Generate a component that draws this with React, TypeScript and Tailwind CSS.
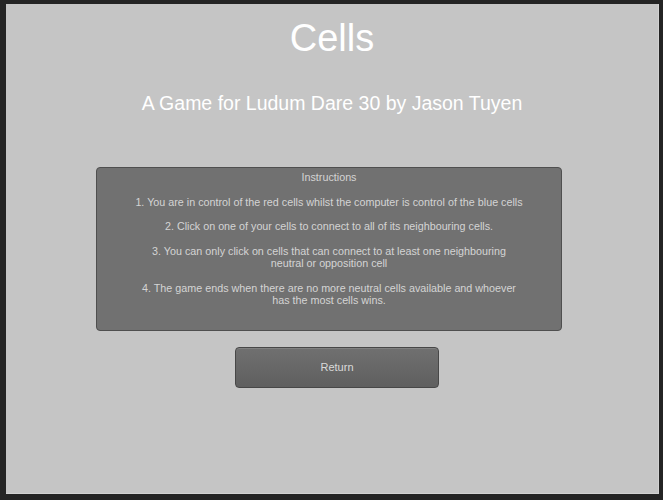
import React from "react";

export default function App() {
  const font = { fontFamily: '"Liberation Sans", Arial, sans-serif' };
  return (
    <div
      className="w-[663px] h-[500px] bg-[#242424] pt-[4px] pl-[6px] pr-[4px] pb-[6px]"
      style={font}
    >
      <div className="w-full h-full bg-[#c5c5c5] border-r border-b border-[#d2d2d2] flex flex-col">
        <div className="text-center text-white text-[38px] leading-[44px] mt-[12px]">Cells</div>
        <div className="text-center text-white text-[19.5px] leading-[22px] mt-[32px]">
          A Game for Ludum Dare 30 by Jason Tuyen
        </div>
        <div className="ml-[90px] mt-[53px] w-[466px] h-[164px] bg-[#717171] border border-[#4f4f4f] rounded-[4px] text-[#d4d4d4] text-[10.75px] leading-[12.3px] text-center pt-[3px]">
          <p>Instructions</p>
          <p className="mt-[12.3px]">
            1. You are in control of the red cells whilst the computer is control of the blue cells
          </p>
          <p className="mt-[12.3px]">
            2. Click on one of your cells to connect to all of its neighbouring cells.
          </p>
          <p className="mt-[12.3px]">
            3. You can only click on cells that can connect to at least one neighbouring
            <br />
            neutral or opposition cell
          </p>
          <p className="mt-[12.3px]">
            4. The game ends when there are no more neutral cells available and whoever
            <br />
            has the most cells wins.
          </p>
        </div>
        <button className="ml-[229px] mt-[16px] w-[204px] h-[41px] rounded-[4px] border border-[#474747] bg-gradient-to-b from-[#707070] to-[#5f5f5f] text-[#dadada] text-[11px] shadow-[inset_0_1px_0_rgba(255,255,255,0.12)]">
          Return
        </button>
      </div>
    </div>
  );
}
